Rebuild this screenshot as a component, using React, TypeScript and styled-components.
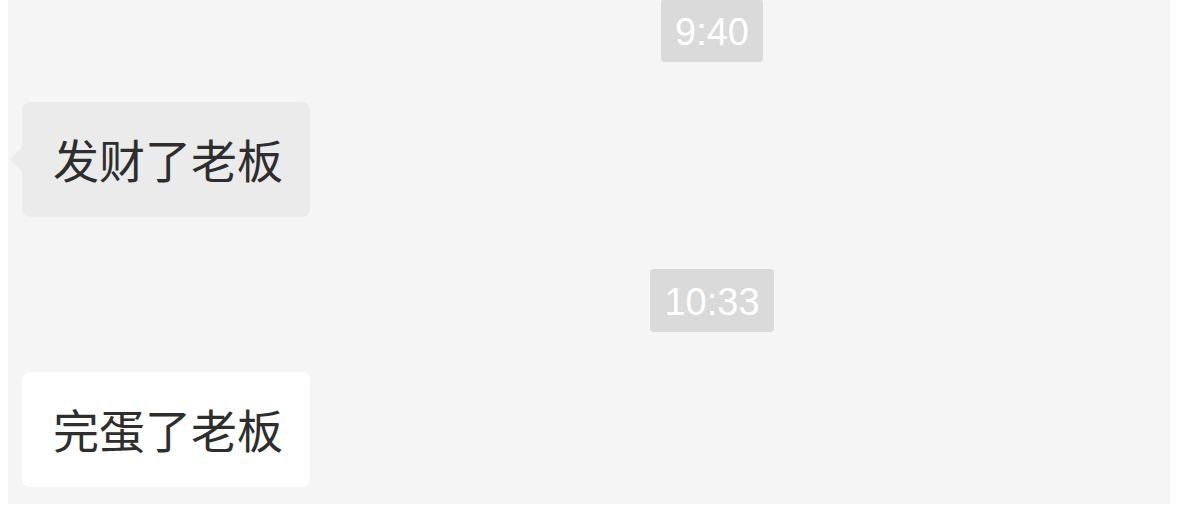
import styled, { createGlobalStyle } from "styled-components";

const GlobalStyle = createGlobalStyle`
    body {
        margin: 0;
        background: #ffffff;
    }
`;

const ChatPanel = styled.div`
    display: flex;
    flex-direction: column;
    margin-left: 8px;
    width: 1162px;
    height: 504px;
    background-color: #f5f5f5;
    font-family: "Noto Sans CJK SC", "Liberation Sans", sans-serif;
`;

const TimeRow = styled.div<{ $top: number }>`
    display: flex;
    justify-content: center;
    padding-left: 246px;
    margin-top: ${(p) => p.$top}px;
`;

const TimeStamp = styled.span`
    display: block;
    height: 60px;
    line-height: 60px;
    padding: 3px 14px 0;
    background-color: #dadada;
    border-radius: 4px;
    color: #ffffff;
    font-family: "Liberation Sans", sans-serif;
    font-size: 38px;
`;

const MessageRow = styled.div<{ $top: number }>`
    display: flex;
    padding-left: 14px;
    margin-top: ${(p) => p.$top}px;
`;

const Bubble = styled.div<{ $bg: string; $tail?: boolean }>`
    position: relative;
    padding: 28px 27px 31px 31px;
    background-color: ${(p) => p.$bg};
    border-radius: 8px;
    color: #2e2e2e;
    font-size: 46px;
    line-height: 56px;

    &::before {
        content: "";
        display: ${(p) => (p.$tail ? "block" : "none")};
        position: absolute;
        left: -12px;
        top: 45px;
        border-style: solid;
        border-width: 12px 12px 12px 0;
        border-color: transparent ${(p) => p.$bg} transparent transparent;
    }
`;

export default function App() {
    return (
        <>
            <GlobalStyle />
            <ChatPanel>
                <TimeRow $top={-1}>
                    <TimeStamp>9:40</TimeStamp>
                </TimeRow>
                <MessageRow $top={40}>
                    <Bubble $bg="#ebebeb" $tail>发财了老板</Bubble>
                </MessageRow>
                <TimeRow $top={52}>
                    <TimeStamp>10:33</TimeStamp>
                </TimeRow>
                <MessageRow $top={40}>
                    <Bubble $bg="#ffffff">完蛋了老板</Bubble>
                </MessageRow>
            </ChatPanel>
        </>
    );
}
